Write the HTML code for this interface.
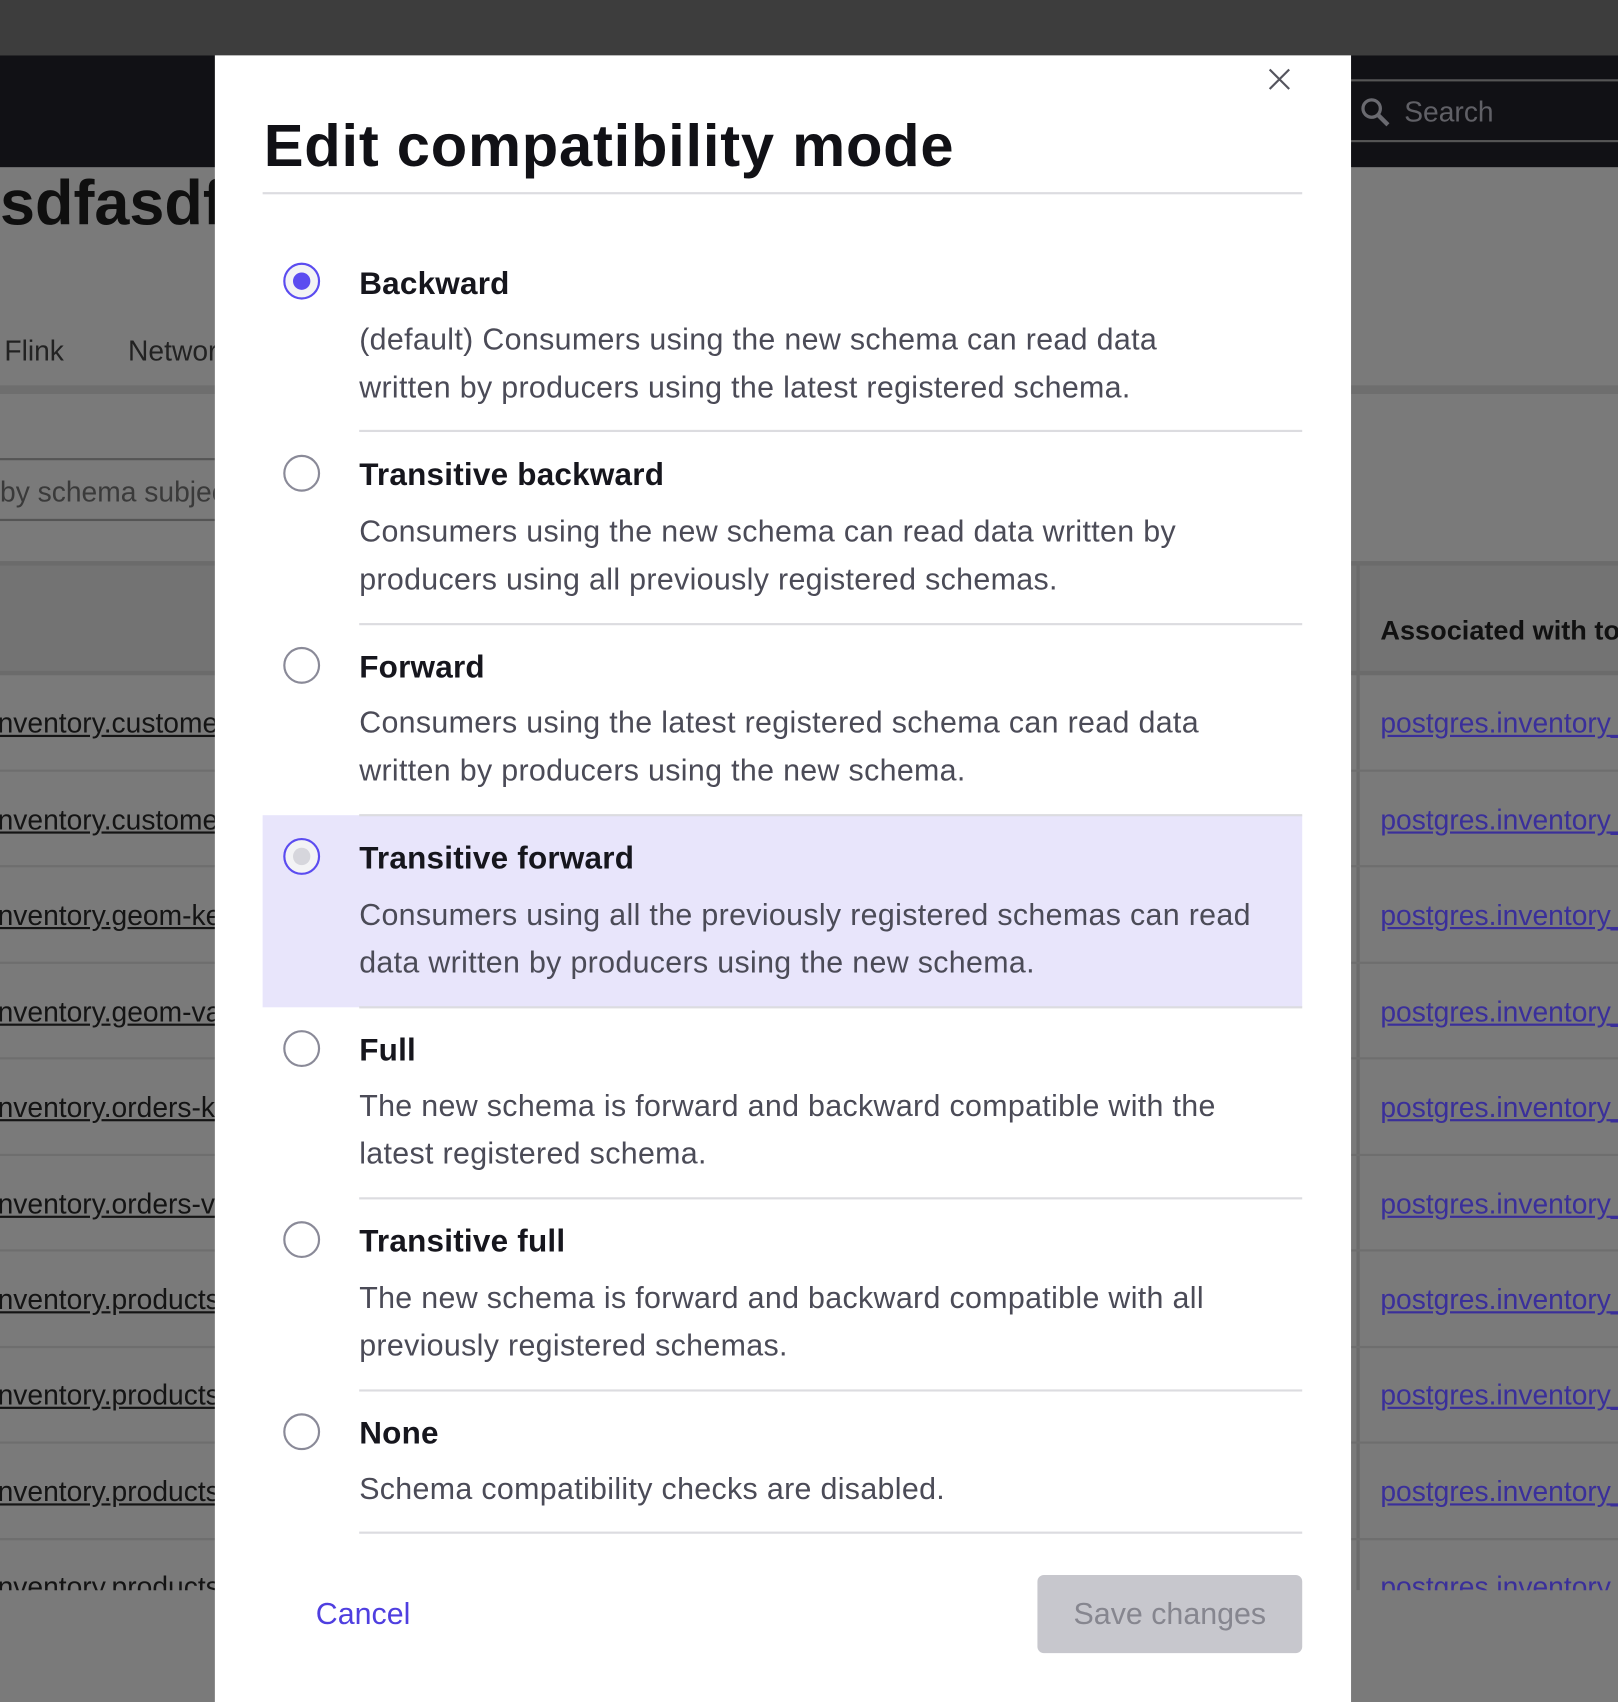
<!DOCTYPE html>
<html><head><meta charset="utf-8"><style>
html,body{margin:0;padding:0;width:1618px;height:1702px;overflow:hidden;background:#7a7a7a;}
#w{position:absolute;left:0;top:0;width:1491px;height:1568px;transform:scale(1.08518,1.08546);transform-origin:0 0;font-family:"Liberation Sans",sans-serif;overflow:hidden;}
.a{position:absolute;}
.lk{position:absolute;font-size:26px;color:#141414;text-decoration:underline;white-space:nowrap;}
.rk{position:absolute;left:1272px;font-size:26px;color:#3a2f9a;text-decoration:underline;white-space:nowrap;}
.hl{position:absolute;height:2px;background:#6e6e6e;}
.m{position:absolute;left:198px;top:51px;width:1047px;height:1517px;background:#fff;}
.r{position:absolute;width:34px;height:34px;border:2px solid #8a8a98;border-radius:50%;box-sizing:border-box;left:261px;}
.t{position:absolute;left:331px;font-size:29px;font-weight:bold;color:#16161d;letter-spacing:0.2px;}
.d{position:absolute;left:331px;font-size:28px;color:#4b4b57;line-height:44px;width:900px;letter-spacing:0.3px;white-space:nowrap;}
.sep{position:absolute;left:331px;width:869px;height:2px;background:#dcdce0;}
</style></head><body><div id="w">
<div class="a" style="left:0;top:0;width:1491px;height:51px;background:#3d3d3d"></div>
<div class="a" style="left:0;top:51px;width:1491px;height:103px;background:#111115"></div>
<div class="a" style="left:1245px;top:73px;width:246px;height:58px;border-top:2px solid #555;border-bottom:2px solid #555;box-sizing:border-box"></div>
<svg class="a" style="left:1252px;top:88px" width="30" height="30" viewBox="0 0 30 30"><circle cx="12" cy="12" r="8" fill="none" stroke="#6a6a70" stroke-width="3"/><path d="M18 18 L27 27" stroke="#6a6a70" stroke-width="4"/></svg>
<div class="a" style="left:1294px;top:88px;font-size:26px;color:#606066">Search</div>
<div class="a" style="left:0;top:154px;font-size:58px;font-weight:bold;color:#0f0f0f">sdfasdf</div>
<div class="a" style="left:4px;top:308px;font-size:26px;color:#222">Flink</div>
<div class="a" style="left:118px;top:308px;font-size:26px;color:#222">Network</div>
<div class="a" style="left:0;top:355px;width:1491px;height:8px;background:#6e6e6e"></div>
<div class="a" style="left:0;top:422px;width:198px;height:58px;border-top:2px solid #555;border-bottom:2px solid #555;box-sizing:border-box"></div>
<div class="a" style="left:0;top:438px;font-size:26px;color:#3a3a3a">by schema subject</div>
<div class="a" style="left:0;top:517px;width:1491px;height:105px;background:#737373;border-top:4px solid #6b6b6b;border-bottom:4px solid #6b6b6b;box-sizing:border-box"></div>
<div class="a" style="left:1250px;top:520px;width:3px;height:945px;background:#6a6a6a"></div>
<div class="a" style="left:1272px;top:567px;font-size:25px;font-weight:bold;color:#111;white-space:nowrap">Associated with topic</div>
<div class="hl" style="left:0;width:1491px;top:709px"></div><div class="hl" style="left:0;width:1491px;top:797px"></div><div class="hl" style="left:0;width:1491px;top:886px"></div><div class="hl" style="left:0;width:1491px;top:974px"></div><div class="hl" style="left:0;width:1491px;top:1063px"></div><div class="hl" style="left:0;width:1491px;top:1151px"></div><div class="hl" style="left:0;width:1491px;top:1240px"></div><div class="hl" style="left:0;width:1491px;top:1328px"></div><div class="hl" style="left:0;width:1491px;top:1417px"></div>
<div class="a" style="left:0;top:1465px;width:1491px;height:103px;background:#7a7a7a"></div>
<div class="lk" style="left:-8px;top:651px">inventory.customers</div><div class="lk" style="left:-8px;top:740px">inventory.customers</div><div class="lk" style="left:-8px;top:828px">inventory.geom-key</div><div class="lk" style="left:-8px;top:917px">inventory.geom-value</div><div class="lk" style="left:-8px;top:1005px">inventory.orders-key</div><div class="lk" style="left:-8px;top:1094px">inventory.orders-value</div><div class="lk" style="left:-8px;top:1182px">inventory.products</div><div class="lk" style="left:-8px;top:1270px">inventory.products</div><div class="lk" style="left:-8px;top:1359px">inventory.products</div><div class="lk" style="left:-8px;top:1447px;height:18px;overflow:hidden">inventory.products</div>
<div class="rk" style="top:651px">postgres.inventory_x</div><div class="rk" style="top:740px">postgres.inventory_x</div><div class="rk" style="top:828px">postgres.inventory_x</div><div class="rk" style="top:917px">postgres.inventory_x</div><div class="rk" style="top:1005px">postgres.inventory_x</div><div class="rk" style="top:1094px">postgres.inventory_x</div><div class="rk" style="top:1182px">postgres.inventory_x</div><div class="rk" style="top:1270px">postgres.inventory_x</div><div class="rk" style="top:1359px">postgres.inventory_x</div><div class="rk" style="top:1447px;height:18px;overflow:hidden">postgres.inventory_x</div>

<div class="m"></div>
<svg class="a" style="left:1166px;top:60px" width="26" height="26" viewBox="0 0 26 26"><path d="M4 4L22 22M22 4L4 22" stroke="#55555e" stroke-width="2"/></svg>
<div class="a" style="left:243px;top:102px;font-size:55px;font-weight:bold;color:#111116;letter-spacing:0.7px">Edit compatibility mode</div>
<div class="a" style="left:242px;top:177px;width:958px;height:2px;background:#dcdce0"></div>
<div class="a" style="left:242px;top:751px;width:958px;height:177px;background:#e8e5fb"></div>

<div class="r" style="top:242px;border-color:#5b4cf0;background:#f3f3f5"><div class="a" style="left:7px;top:7px;width:16px;height:16px;border-radius:50%;background:#5b4cf0"></div></div>
<div class="t" style="top:246px">Backward</div>
<div class="d" style="top:291px">(default) Consumers using the new schema can read data<br>written by producers using the latest registered schema.</div>
<div class="sep" style="top:396px"></div>

<div class="r" style="top:419px"></div>
<div class="t" style="top:422px">Transitive backward</div>
<div class="d" style="top:468px">Consumers using the new schema can read data written by<br>producers using all previously registered schemas.</div>
<div class="sep" style="top:574px"></div>

<div class="r" style="top:596px"></div>
<div class="t" style="top:599px">Forward</div>
<div class="d" style="top:644px">Consumers using the latest registered schema can read data<br>written by producers using the new schema.</div>
<div class="sep" style="top:750px"></div>

<div class="r" style="top:772px;border-color:#5b4cf0;background:#f3f3f5"><div class="a" style="left:7px;top:7px;width:16px;height:16px;border-radius:50%;background:#d6d6dc"></div></div>
<div class="t" style="top:775px">Transitive forward</div>
<div class="d" style="top:821px">Consumers using all the previously registered schemas can read<br>data written by producers using the new schema.</div>
<div class="sep" style="top:927px"></div>

<div class="r" style="top:949px"></div>
<div class="t" style="top:952px">Full</div>
<div class="d" style="top:997px">The new schema is forward and backward compatible with the<br>latest registered schema.</div>
<div class="sep" style="top:1103px"></div>

<div class="r" style="top:1125px"></div>
<div class="t" style="top:1128px">Transitive full</div>
<div class="d" style="top:1174px">The new schema is forward and backward compatible with all<br>previously registered schemas.</div>
<div class="sep" style="top:1280px"></div>

<div class="r" style="top:1302px"></div>
<div class="t" style="top:1305px">None</div>
<div class="d" style="top:1350px">Schema compatibility checks are disabled.</div>
<div class="sep" style="top:1411px"></div>

<div class="a" style="left:291px;top:1471px;font-size:28px;color:#4f3fe0">Cancel</div>
<div class="a" style="left:956px;top:1451px;width:244px;height:72px;background:#c7c7cd;border-radius:6px;color:#86868f;font-size:28px;text-align:center;line-height:72px">Save changes</div>
</div></body></html>
